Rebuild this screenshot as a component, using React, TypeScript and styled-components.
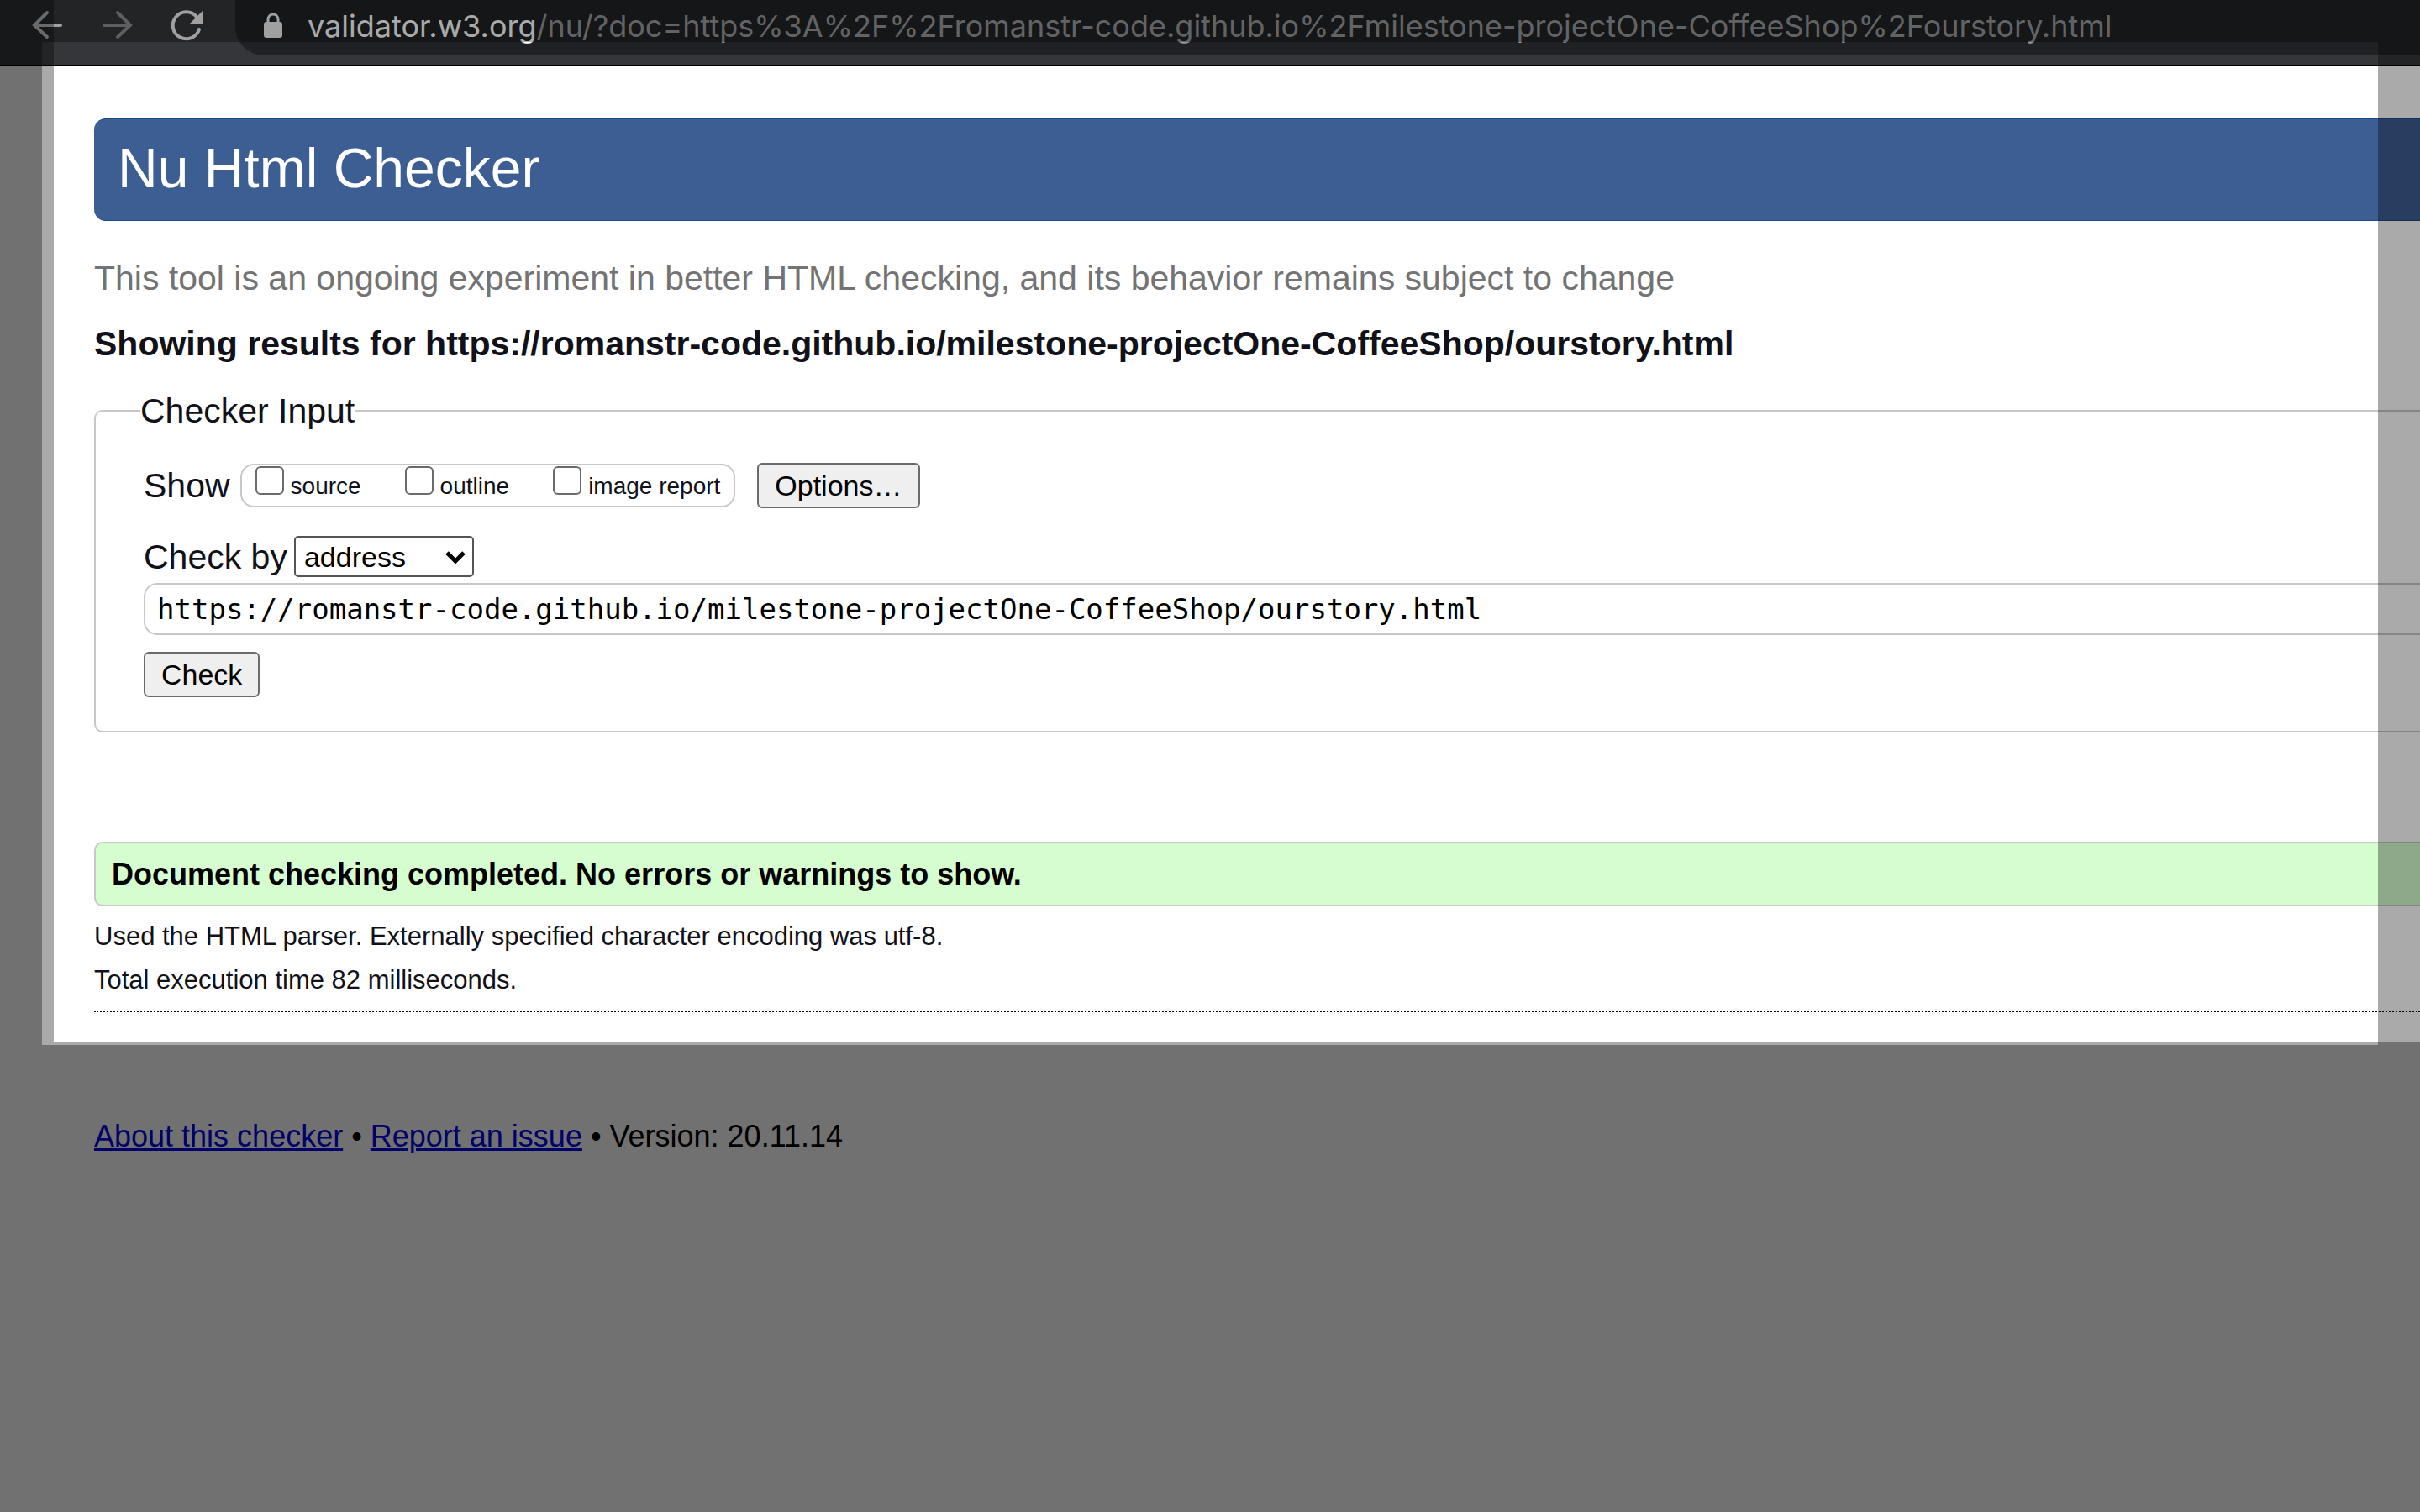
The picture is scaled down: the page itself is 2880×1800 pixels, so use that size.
import React from "react";
import styled, { createGlobalStyle } from "styled-components";

const sans = `"Liberation Sans", Arial, Helvetica, sans-serif`;

const GlobalStyle = createGlobalStyle`
  *, *::before, *::after { box-sizing: border-box; }
  body { margin: 0; background: #fff; font-family: ${sans}; color: #111119; }
`;

const Screen = styled.div`
  position: relative;
  min-height: 100vh;
  overflow: hidden;
  background: #fff;
`;

const Spotlight = styled.div`
  position: relative;
  padding-bottom: 36px;
`;

const Dim = styled.div<{ $inset: string }>`
  position: absolute;
  inset: ${(p) => p.$inset};
  box-shadow: 0 0 0 4000px rgba(0, 0, 0, 0.333);
  pointer-events: none;
`;

const Toolbar = styled.header`
  display: flex;
  align-items: flex-start;
  height: 79px;
  padding-left: 34px;
  overflow: hidden;
  background: #35363a;
  border-bottom: 2px solid #000;
`;

const NavButton = styled.button`
  display: flex;
  align-items: center;
  justify-content: center;
  width: 44px;
  height: 60px;
  margin-right: 38px;
  padding: 0;
  border: 0;
  background: none;
  color: #f1f1f1;

  &:disabled { color: #8e8f91; }
`;

const AddressBar = styled.div`
  display: flex;
  flex: 1;
  align-items: center;
  height: 66px;
  padding: 0 0 4px 34px;
  gap: 30px;
  border-radius: 0 0 0 34px;
  background: #202124;
  color: #f1f1f1;
`;

const Url = styled.span`
  font: 36px/44px Inter, ${sans};
  white-space: nowrap;
  color: #949597;

  b { font-weight: 400; color: #fff; }
`;

const Main = styled.main`
  display: flex;
  flex-direction: column;
  padding: 62px 0 0 112px;
`;

const Title = styled.h1`
  margin: 0 0 44px;
  padding: 18px 28px 22px;
  border-block: 1px solid #1a4a8c;
  border-radius: 14px 0 0 14px;
  background: #3d5e92;
  color: #fff;
  font-size: 66px;
  font-weight: 400;
  line-height: 80px;
`;

const Tagline = styled.p`
  margin: 0 0 30px;
  color: #737373;
  font-size: 41px;
  line-height: 48px;
`;

const ResultsHeading = styled.h2`
  margin: 0 0 32px;
  font-size: 41px;
  line-height: 48px;
`;

const Panel = styled.fieldset`
  display: flex;
  flex-direction: column;
  margin: 0 0 130px;
  padding: 38px 0 40px 57px;
  border: 2px solid #c8c8c8;
  border-right: 0;
  border-radius: 10px 0 0 10px;
`;

const Legend = styled.legend`
  margin-left: -4px;
  padding: 0;
  font-size: 41px;
  line-height: 48px;
`;

const Row = styled.div<{ $gap: number; $bottom: number }>`
  display: flex;
  align-items: center;
  gap: ${(p) => p.$gap}px;
  margin-bottom: ${(p) => p.$bottom}px;
  font-size: 41px;
  line-height: 48px;
`;

const CheckGroup = styled.div`
  display: flex;
  gap: 52px;
  height: 52px;
  margin-right: 14px;
  padding: 0 16px;
  border: 2px solid #c8c8c8;
  border-radius: 16px;
`;

const CheckLabel = styled.label`
  display: flex;
  gap: 8px;
  font-size: 28px;
  line-height: 50px;
`;

const Checkbox = styled.input`
  appearance: none;
  width: 34px;
  height: 34px;
  margin: 1px 0 0;
  border: 2px solid #6b6b6b;
  border-radius: 6px;
  background: #fff;
`;

const Button = styled.button`
  align-self: flex-start;
  height: 54px;
  padding: 0 19px;
  border: 2px solid #6b6b6b;
  border-radius: 6px;
  background: #efefef;
  color: #000;
  font: 34px/48px ${sans};
`;

const SelectBox = styled.span`
  position: relative;
  display: flex;

  svg { position: absolute; right: 9px; top: 17px; pointer-events: none; }
`;

const Select = styled.select`
  appearance: none;
  width: 214px;
  height: 49px;
  padding: 0 10px;
  border: 2px solid #555;
  border-radius: 5px;
  background: #fff;
  color: #000;
  font: 34px/44px ${sans};
`;

const UrlInput = styled.input`
  width: 100%;
  height: 62px;
  margin-bottom: 20px;
  padding: 0 14px;
  border: 2px solid #c8c8c8;
  border-right: 0;
  border-radius: 16px 0 0 16px;
  background: #fff;
  color: #000;
  font: 34px/44px "DejaVu Sans Mono", monospace;
`;

const Success = styled.p`
  margin: 0 0 16px;
  padding: 14px 19px;
  border: 2px solid #c8c8c8;
  border-right: 0;
  border-radius: 10px 0 0 10px;
  background: #d5fdd0;
  color: #000;
  font-size: 36px;
  font-weight: 700;
  line-height: 45px;
`;

const Note = styled.p`
  margin: 0 0 12px;
  font-size: 31px;
  line-height: 40px;
`;

const Rule = styled.hr`
  width: 100%;
  margin: 4px 0 0;
  border: 0;
  border-top: 2px dotted #000;
`;

const Footer = styled.footer`
  padding: 88px 112px;
  color: #000;
  font-size: 36px;
  line-height: 48px;

  a { color: #0000ee; text-decoration-thickness: 3px; }
`;

const Arrow = ({ flip = false }: { flip?: boolean }) => (
  <svg width="44" height="60" viewBox="0 0 44 60" fill="none" stroke="currentColor" strokeWidth="4" strokeLinecap="round">
    <path d={flip ? "M8 30H38M24 15L39 30L24 44" : "M38 30H8M22 15L7 30L22 44"} />
  </svg>
);

export default function App() {
  return (
    <>
      <GlobalStyle />
      <Screen>
        <Spotlight>
          <Toolbar>
            <NavButton aria-label="Back"><Arrow /></NavButton>
            <NavButton aria-label="Forward" disabled><Arrow flip /></NavButton>
            <NavButton aria-label="Reload">
              <svg width="44" height="60" viewBox="0 0 44 60" fill="none">
                <path d="M36 20A16 16 0 1 0 39 35" stroke="currentColor" strokeWidth="4" strokeLinecap="round" />
                <path d="M43 13V28H28Z" fill="currentColor" />
              </svg>
            </NavButton>
            <AddressBar>
              <svg width="22" height="30" viewBox="0 0 22 30">
                <rect y="10" width="22" height="19" rx="3" fill="currentColor" />
                <path d="M5 11V7a6 6 0 0 1 12 0v4" fill="none" stroke="currentColor" strokeWidth="3" />
              </svg>
              <Url>
                <b>validator.w3.org</b>
                /nu/?doc=https%3A%2F%2Fromanstr-code.github.io%2Fmilestone-projectOne-CoffeeShop%2Fourstory.html
              </Url>
            </AddressBar>
          </Toolbar>
          <Main>
            <Title>Nu Html Checker</Title>
            <Tagline>This tool is an ongoing experiment in better HTML checking, and its behavior remains subject to change</Tagline>
            <ResultsHeading>Showing results for https://romanstr-code.github.io/milestone-projectOne-CoffeeShop/ourstory.html</ResultsHeading>
            <Panel>
              <Legend>Checker Input</Legend>
              <Row $gap={12} $bottom={33}>
                Show
                <CheckGroup>
                  {["source", "outline", "image report"].map((name) => (
                    <CheckLabel key={name}>
                      <Checkbox type="checkbox" />
                      {name}
                    </CheckLabel>
                  ))}
                </CheckGroup>
                <Button type="button">Options…</Button>
              </Row>
              <Row $gap={8} $bottom={7}>
                <label htmlFor="method">Check by</label>
                <SelectBox>
                  <Select id="method" defaultValue="address">
                    <option>address</option>
                    <option>file upload</option>
                    <option>text input</option>
                  </Select>
                  <svg width="26" height="18" viewBox="0 0 26 18" fill="none">
                    <path d="M3 3L13 13L23 3" stroke="#000" strokeWidth="5" />
                  </svg>
                </SelectBox>
              </Row>
              <UrlInput
                aria-label="Document address"
                defaultValue="https://romanstr-code.github.io/milestone-projectOne-CoffeeShop/ourstory.html"
              />
              <Button type="submit">Check</Button>
            </Panel>
            <Success>Document checking completed. No errors or warnings to show.</Success>
            <Note>Used the HTML parser. Externally specified character encoding was utf-8.</Note>
            <Note>Total execution time 82 milliseconds.</Note>
            <Rule />
          </Main>
          <Dim $inset="0 0 0 64px" />
          <Dim $inset="50px 50px -3px 50px" />
        </Spotlight>
        <Footer>
          <a href="#about">About this checker</a> • <a href="#issue">Report an issue</a> • Version: 20.11.14
        </Footer>
      </Screen>
    </>
  );
}
